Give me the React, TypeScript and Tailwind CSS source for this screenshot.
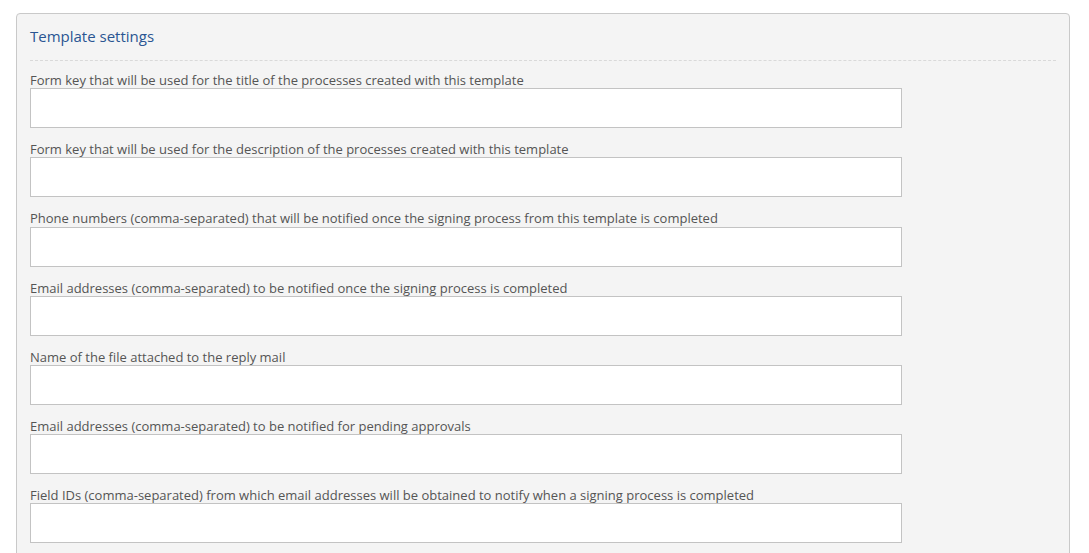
import React from "react";

const labels = [
  "Form key that will be used for the title of the processes created with this template",
  "Form key that will be used for the description of the processes created with this template",
  "Phone numbers (comma-separated) that will be notified once the signing process from this template is completed",
  "Email addresses (comma-separated) to be notified once the signing process is completed",
  "Name of the file attached to the reply mail",
  "Email addresses (comma-separated) to be notified for pending approvals",
  "Field IDs (comma-separated) from which email addresses will be obtained to notify when a signing process is completed",
];

export default function App() {
  return (
    <div className="w-[1089px] h-[553px] overflow-hidden bg-white pt-[13px] pl-[16px]" style={{ fontFamily: '"Open Sans", sans-serif' }}>
      <div className="w-[1054px] min-h-[600px] rounded-[4px] border border-[#c9c9c9] bg-[#f4f4f4] px-[13px] pt-[12px]">
        <div className="text-[15px] leading-[20px] text-[#2a5592] pb-[14px] border-b border-dashed border-[#d9d9d9]">
          Template settings
        </div>
        <div className="pt-[10px] flex flex-col">
          {labels.map((l) => (
            <div key={l} className="mb-[12px]">
              <div className="pt-[1px] text-[13px] leading-[16.17px] text-[#555555] whitespace-nowrap">{l}</div>
              <input className="block w-[872px] h-[40px] border border-[#c3c3c3] bg-white outline-none" />
            </div>
          ))}
        </div>
      </div>
    </div>
  );
}
